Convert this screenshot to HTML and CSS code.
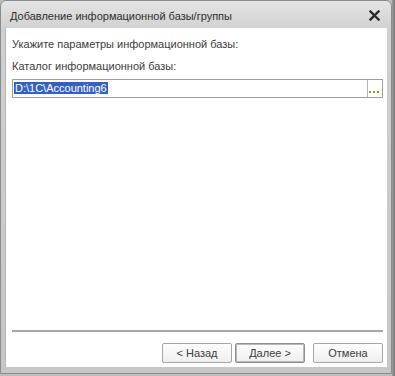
FILE: index.html
```html
<!DOCTYPE html>
<html lang="ru">
<head>
    <meta charset="UTF-8">
    <title>Добавление информационной базы/группы</title>
    <link rel="stylesheet" href="styles.css">
</head>
<body>
    <div class="desk">
        <div class="window">
            <div class="titlebar">
                <span class="title">Добавление информационной базы/группы</span>
                <span class="close">
                    <svg width="11" height="11" viewBox="0 0 11 11">
                        <path d="M1.5 1.5 L9.5 9.5 M9.5 1.5 L1.5 9.5" stroke="#2b2b2b" stroke-width="2.4" stroke-linecap="square"/>
                    </svg>
                </span>
            </div>
            <div class="content">
                <div class="label first">Укажите параметры информационной базы:</div>
                <div class="label">Каталог информационной базы:</div>
                <div class="field">
                    <div class="field-text"><span class="selected">D:\1C\Accounting6</span></div>
                    <div class="field-btn">
                        <svg width="12" height="4" viewBox="0 0 12 4">
                            <rect x="0" y="1" width="2" height="2" fill="#b58a00"/>
                            <rect x="4" y="1" width="2" height="2" fill="#b58a00"/>
                            <rect x="8" y="1" width="2" height="2" fill="#b58a00"/>
                        </svg>
                    </div>
                </div>
                <div class="spacer"></div>
                <div class="separator"></div>
                <div class="buttons">
                    <button class="btn">&lt; Назад</button>
                    <button class="btn default">Далее &gt;</button>
                    <button class="btn cancel">Отмена</button>
                </div>
            </div>
        </div>
        <div class="side"></div>
    </div>
</body>
</html>
```

FILE: styles.css
```css
body {
    margin: 0;
    background: #bdbdbd;
    font-family: "Liberation Sans", Arial, sans-serif;
    font-size: 11px;
    color: #3c3c3c;
}
.desk {
    display: flex;
    width: 395px;
    height: 376px;
    overflow: hidden;
}
.window {
    width: 392px;
    height: 374px;
    box-sizing: border-box;
    border: 1px solid #8c8c8c;
    border-radius: 6px 6px 0 0;
    background: linear-gradient(#e4e4e4, #d0d0d0 30px, #c6c6c6);
    padding: 0 4px 6px 4px;
    display: flex;
    flex-direction: column;
}
.side {
    flex: 1;
    background: linear-gradient(90deg, #9c9c9c, #777);
}
.titlebar {
    height: 27px;
    display: flex;
    align-items: center;
    justify-content: space-between;
    padding: 0 4px 0 5px;
}
.title {
    color: #2e2e2e;
    padding-top: 2px;
}
.close {
    display: flex;
    margin-right: 3px;
    margin-top: 2px;
}
.content {
    flex: 1;
    background: #fff;
    display: flex;
    flex-direction: column;
    padding: 0 4px 4px 6px;
    border-left: 1px solid #b5b5b5;
}
.label {
    height: 14px;
    line-height: 14px;
    margin-top: 8px;
}
.label.first {
    margin-top: 9px;
}
.field {
    margin-top: 6px;
    height: 19px;
    box-sizing: border-box;
    border: 1px solid #9d9d9d;
    display: flex;
}
.field-text {
    flex: 1;
    padding: 2px 1px;
    line-height: 13px;
}
.selected {
    background: #3460c6;
    color: #fff;
    padding: 0 1px;
}
.field-btn {
    width: 15px;
    border-left: 1px solid #b5b5b5;
    display: flex;
    align-items: flex-end;
    justify-content: center;
    padding-bottom: 3px;
    box-sizing: border-box;
}
.spacer {
    flex: 1;
}
.separator {
    height: 2px;
    background: #a7a7a7;
    margin-bottom: 11px;
}
.buttons {
    display: flex;
    justify-content: flex-end;
    gap: 3px;
}
.btn {
    width: 70px;
    height: 20px;
    box-sizing: border-box;
    border: 1px solid #a5a5a5;
    border-radius: 2px;
    background: linear-gradient(#fdfdfd, #efefef);
    font-family: "Liberation Sans", Arial, sans-serif;
    font-size: 11px;
    color: #3c3c3c;
    padding: 0;
}
.btn.default {
    border: 1px solid #8e8e8e;
    box-shadow: inset 0 0 0 1px #b8b8b8;
}
.btn.cancel {
    margin-left: 5px;
}
```
